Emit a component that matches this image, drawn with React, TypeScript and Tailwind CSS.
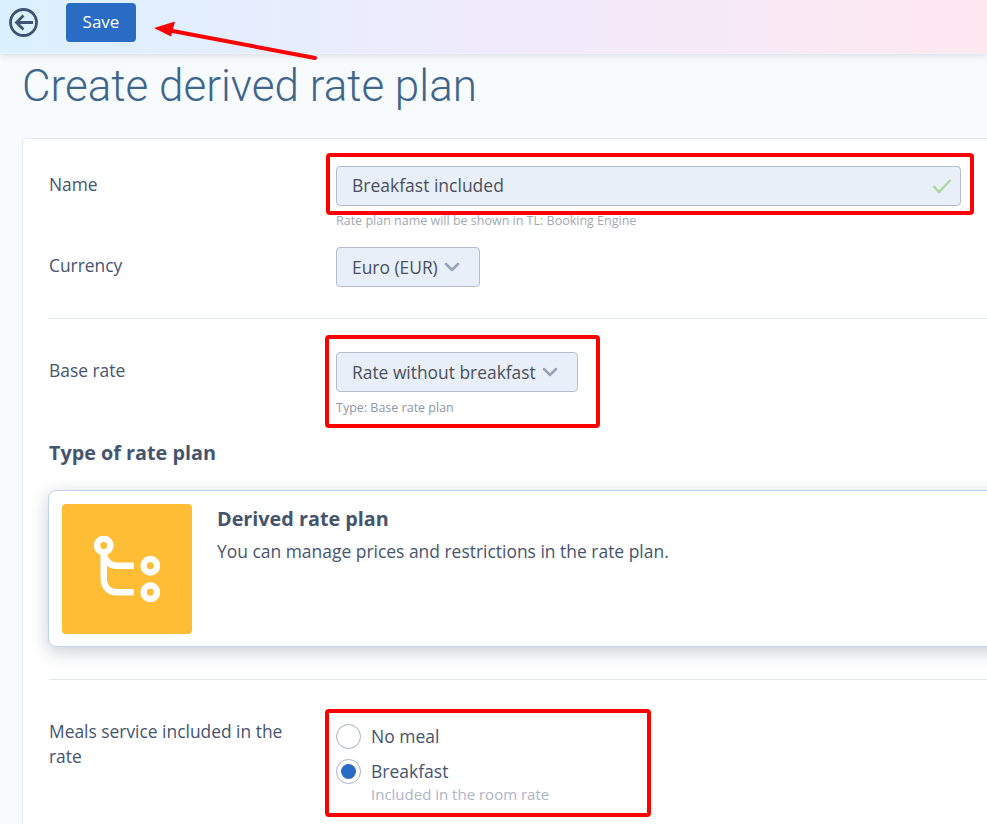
import { ChevronDown } from "lucide-react";

const font = { fontFamily: '"Open Sans", sans-serif' };

function Select({ label }: { label: string }) {
  return (
    <div className="inline-flex h-10 items-center gap-[2px] rounded border border-[#b3bdcf] bg-[#e9eff8] pl-[15px] pr-[15px] text-[17.4px] text-[#4a4f5c]">
      <span>{label}</span>
      <ChevronDown className="h-6 w-6 text-[#98a2b3]" strokeWidth={2.5} />
    </div>
  );
}

function Radio({ label, checked }: { label: string; checked?: boolean }) {
  return (
    <div className="flex h-[25px] items-center gap-[10px] text-[17.5px] text-[#45546e]">
      <span className="flex h-[25px] w-[25px] items-center justify-center rounded-full border border-[#a6b1c6] bg-white">
        {checked && <span className="h-[15px] w-[15px] rounded-full bg-[#2a6bc4]" />}
      </span>
      <span>{label}</span>
    </div>
  );
}

export default function App() {
  return (
    <div className="relative h-[824px] w-[987px] overflow-hidden bg-[#f7fbfe]" style={font}>
      {/* Top bar */}
      <div className="flex h-[54px] items-start border-b border-[#eef1f6] bg-gradient-to-r from-[#dbf1ff] via-[#efeafc] to-[#ffe8f0] pl-[9px] pt-[3px] shadow-[0_2px_6px_rgba(80,90,110,0.16)]">
        <svg width="29" height="29" viewBox="0 0 29 29" fill="none" stroke="#3f5272" strokeWidth="2.8" className="mt-[5px]">
          <circle cx="14.5" cy="14.5" r="13" />
          <path d="M24 14.5H8M14.5 7.5l-7 7 7 7" />
        </svg>
        <button className="ml-[28px] h-[39px] w-[70px] rounded bg-[#2a6bc4] pb-[2px] text-[17px] font-medium text-white">
          Save
        </button>
      </div>

      <h1 className="ml-[22px] mt-[5px] text-[44px] font-light leading-[54px] text-[#3f658b]" style={{ fontFamily: "Roboto, sans-serif" }}>
        Create derived rate plan
      </h1>

      {/* Form card */}
      <div className="ml-[22px] mt-[25px] w-[1040px] rounded-t border border-[#e3e9f1] bg-white pb-[60px] pl-[26px] pr-[20px] pt-[27px]">
        <div className="flex">
          <div className="w-[287px] pt-[5px] text-[17.4px] text-[#45546e]">Name</div>
          <div className="flex-1">
            <div className="flex h-10 w-[625px] items-center justify-between rounded border border-[#b3bdcf] bg-[#e9eff8] pb-[1px] pl-[15px] pr-[8px] text-[17.5px] text-[#4a4f5c]">
              <span>Breakfast included</span>
              <svg width="20" height="16" viewBox="0 0 20 16" fill="none" stroke="#a9d69c" strokeWidth="2.4">
                <path d="M1.5 8l5.5 6L18.5 2" />
              </svg>
            </div>
            <div className="mt-[7px] text-[12.5px] leading-[16px] text-[#a3a9b3]">Rate plan name will be shown in TL: Booking Engine</div>
          </div>
        </div>

        <div className="mt-[18px] flex">
          <div className="w-[287px] pt-[5px] text-[17.4px] text-[#45546e]">Currency</div>
          <Select label="Euro (EUR)" />
        </div>

        <div className="mt-[31px] border-t border-[#dfe6ef]" />

        <div className="mt-[33px] flex">
          <div className="w-[287px] pt-[5px] text-[17.4px] text-[#45546e]">Base rate</div>
          <div>
            <Select label="Rate without breakfast" />
            <div className="mt-[8px] text-[12.5px] leading-[16px] text-[#8f97a3]">Type: Base rate plan</div>
          </div>
        </div>

        <h2 className="mt-[24px] text-[19.8px] font-bold leading-[26px] text-[#45546e]">Type of rate plan</h2>

        {/* Rate plan type */}
        <div className="ml-[-1px] mt-[24px] flex h-[157px] rounded-l-lg border border-[#bcd3ee] bg-white p-[13px] shadow-[0_5px_18px_rgba(70,80,100,0.28)]">
          <div className="flex h-[130px] w-[130px] items-center justify-center rounded bg-[#ffbd35]">
            <svg width="66" height="66" viewBox="0 0 66 66" fill="none" stroke="white" strokeWidth="6.5">
              <circle cx="9.7" cy="9.5" r="6.7" />
              <circle cx="56.3" cy="29.7" r="6.7" />
              <circle cx="56.3" cy="56.3" r="6.7" />
              <path d="M9.7 16v26.3c0 9 5 14 14 14h16M9.7 18c2 8 6 11.700 13 11.700h17" />
            </svg>
          </div>
          <div className="ml-[25px] pt-[2px]">
            <div className="text-[19.8px] font-bold leading-[26px] text-[#45546e]">Derived rate plan</div>
            <div className="mt-[7px] text-[17.45px] leading-[24px] text-[#45546e]">You can manage prices and restrictions in the rate plan.</div>
          </div>
        </div>

        <div className="mt-[32px] border-t border-[#dfe6ef]" />

        <div className="mt-[39px] flex">
          <div className="w-[287px] pr-[30px] text-[17.4px] leading-[25px] text-[#45546e]">Meals service included in the rate</div>
          <div className="mt-[5px] flex flex-col gap-[10px]">
            <Radio label="No meal" />
            <div>
              <Radio label="Breakfast" checked />
              <div className="ml-[35px] text-[15px] leading-[20px] text-[#adb4c4]">Included in the room rate</div>
            </div>
          </div>
        </div>
      </div>

      {/* Annotations */}
      <div className="absolute left-[326px] top-[153px] h-[62px] w-[648px] rounded-sm border-4 border-[#ff0000]" />
      <div className="absolute left-[325px] top-[335px] h-[93px] w-[275px] rounded-sm border-4 border-[#ff0000]" />
      <div className="absolute left-[325px] top-[709px] h-[108px] w-[326px] rounded-sm border-4 border-[#ff0000]" />
      <svg className="absolute left-[150px] top-[20px]" width="172" height="42" viewBox="0 0 172 42" fill="none">
        <path d="M165 38L20 10.500" stroke="#ff0000" strokeWidth="4" strokeLinecap="round" />
        <path d="M4 8L25 1.500L21 16.500Z" fill="#ff0000" />
      </svg>
    </div>
  );
}
